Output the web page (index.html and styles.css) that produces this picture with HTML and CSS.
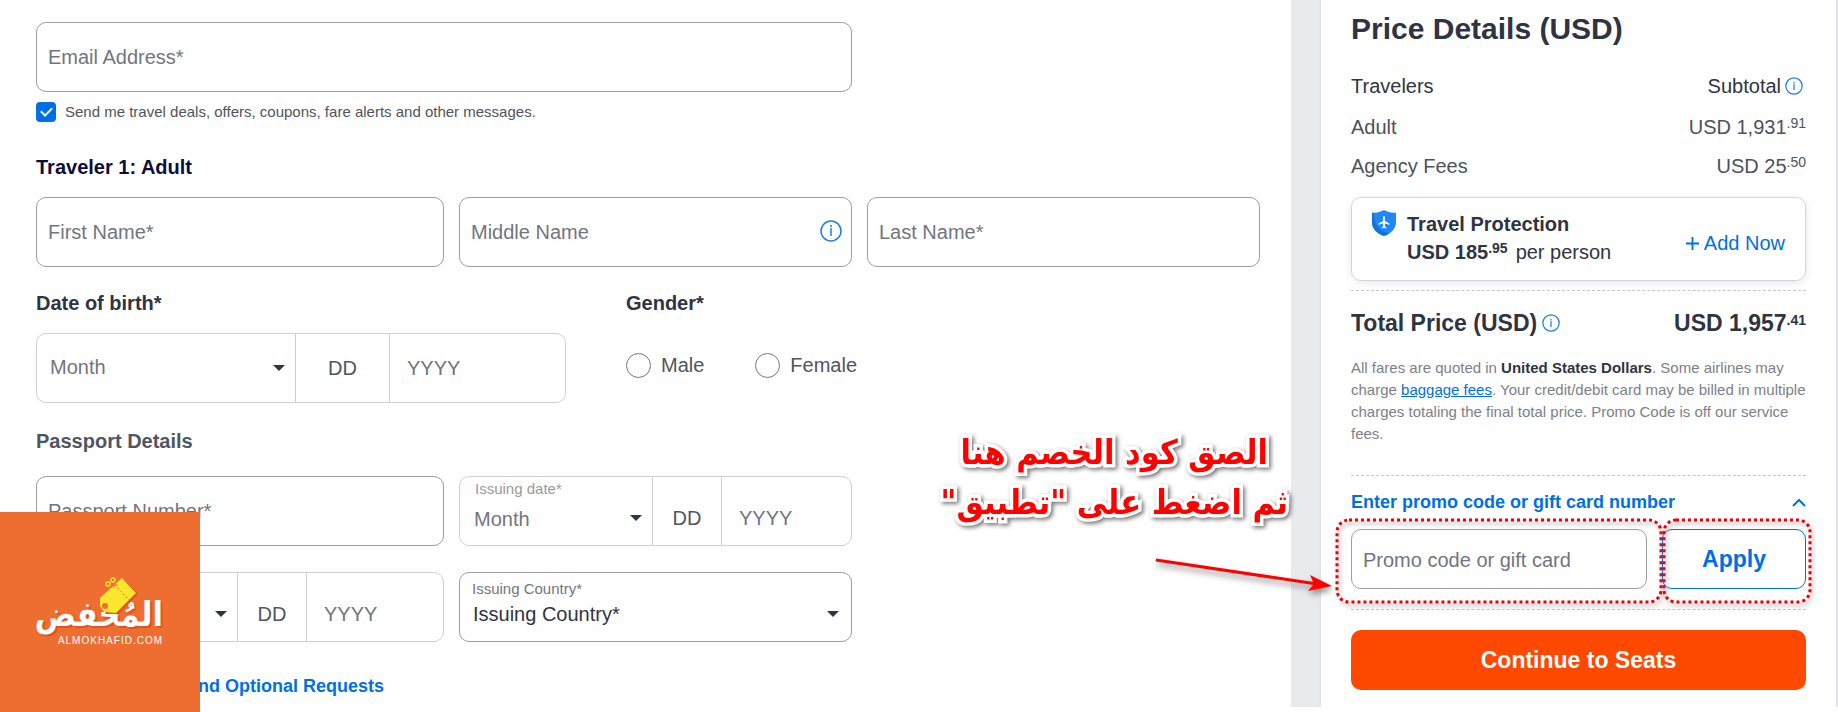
FILE: index.html
```
<!DOCTYPE html>
<html lang="en">
<head>
    <meta charset="UTF-8">
    <meta name="viewport" content="width=device-width, initial-scale=1.0">
    <title>Traveler Details</title>
    <link rel="stylesheet" href="styles.css">
</head>
<body>
    <div class="page">
        <main class="traveler-form">
            <div class="grid">
                <input class="field wide" type="email" placeholder="Email Address*" aria-label="Email Address">
            </div>
            <label class="subscribe">
                <input type="checkbox" checked>
                <span>Send me travel deals, offers, coupons, fare alerts and other messages.</span>
            </label>

            <h2 class="traveler-title">Traveler 1: Adult</h2>
            <div class="grid">
                <input class="field" type="text" placeholder="First Name*" aria-label="First Name">
                <div class="field-wrap">
                    <input class="field" type="text" placeholder="Middle Name" aria-label="Middle Name">
                    <svg class="info" viewBox="0 0 22 22"><circle cx="11" cy="11" r="10"/><path d="M11 8v8M11 5v2"/></svg>
                </div>
                <input class="field" type="text" placeholder="Last Name*" aria-label="Last Name">
            </div>

            <div class="birth-row">
                <section class="birth">
                    <h3>Date of birth*</h3>
                    <div class="date-group">
                        <select class="month" aria-label="Month of birth"><option>Month</option></select>
                        <input class="day" type="text" placeholder="DD" aria-label="Day of birth">
                        <input class="year" type="text" placeholder="YYYY" aria-label="Year of birth">
                    </div>
                </section>
                <section class="gender">
                    <h3>Gender*</h3>
                    <div class="radios">
                        <label><input type="radio" name="gender"> Male</label>
                        <label><input type="radio" name="gender"> Female</label>
                    </div>
                </section>
            </div>

            <h3 class="passport-title">Passport Details</h3>
            <div class="grid passport">
                <input class="field" type="text" placeholder="Passport Number*" aria-label="Passport Number">
                <div class="date-group small issue">
                    <div class="labelled">
                        <label for="issue-month">Issuing date*</label>
                        <select class="month" id="issue-month"><option>Month</option></select>
                    </div>
                    <input class="day" type="text" placeholder="DD" aria-label="Issuing day">
                    <input class="year" type="text" placeholder="YYYY" aria-label="Issuing year">
                </div>
                <div class="date-group small expiry">
                    <select class="month" aria-label="Expiration month"><option>Month</option></select>
                    <input class="day" type="text" placeholder="DD" aria-label="Expiration day">
                    <input class="year" type="text" placeholder="YYYY" aria-label="Expiration year">
                </div>
                <div class="country">
                    <label for="country">Issuing Country*</label>
                    <select id="country"><option>Issuing Country*</option></select>
                </div>
            </div>
            <a class="optional" href="#"><span class="plus">+</span>Frequent Flyer and Optional Requests</a>
        </main>

        <aside class="price-card">
            <h1>Price Details (USD)</h1>
            <div class="row head">
                <span>Travelers</span>
                <span class="with-icon">Subtotal <svg class="info" viewBox="0 0 22 22"><circle cx="11" cy="11" r="10"/><path d="M11 9v7M11 6v2"/></svg></span>
            </div>
            <div class="row adult"><span>Adult</span><span>USD 1,931<sup>.91</sup></span></div>
            <div class="row"><span>Agency Fees</span><span>USD 25<sup>.50</sup></span></div>

            <div class="protection">
                <svg class="shield" viewBox="0 0 24 26">
                    <path fill="#1f87f7" d="M12 0c3.500 2 7.500 2.800 12 2.800V12c0 7-5 11.500-12 14C5 23.500 0 19 0 12V2.800C4.500 2.800 8.500 2 12 0z"/>
                    <path fill="#1272dd" d="M0 12c0 7 5 11.500 12 14 2-.7 4-1.700 5.500-2.800C9 22 2.500 17 1.500 2.800H0z"/>
                    <path fill="#fff" d="M12 6c.6 0 .9.800.9 1.600v3.300l4.600 2.700v1.100l-4.600-1.200v3l1.400 1.100v.8L12 17.800l-2.300.6v-.8l1.400-1.100v-3l-4.600 1.200v-1.100l4.600-2.700V7.600C11.100 6.800 11.400 6 12 6z"/>
                </svg>
                <div class="protection-text">
                    <strong>Travel Protection</strong>
                    <div class="per-person"><strong>USD 185<sup>.95</sup></strong><span>per person</span></div>
                </div>
                <button class="add" type="button"><svg viewBox="0 0 14 14"><path d="M7 0v14M0 7h14"/></svg>Add Now</button>
            </div>

            <div class="row total">
                <span class="with-icon">Total Price (USD) <svg class="info" viewBox="0 0 22 22"><circle cx="11" cy="11" r="10"/><path d="M11 9v7M11 6v2"/></svg></span>
                <span>USD 1,957<sup>.41</sup></span>
            </div>
            <p class="fine">All fares are quoted in <strong>United States Dollars</strong>. Some airlines may charge <a href="#">baggage fees</a>. Your credit/debit card may be billed in multiple charges totaling the final total price. Promo Code is off our service fees.</p>

            <div class="promo">
                <label class="promo-title" for="promo">Enter promo code or gift card number
                    <svg viewBox="0 0 14 9"><path d="M1 8l6-6 6 6"/></svg>
                </label>
                <div class="promo-row">
                    <div class="promo-input">
                        <input id="promo" type="text" placeholder="Promo code or gift card">
                        <svg class="mark"><rect x="2" y="2" rx="12"/></svg>
                    </div>
                    <div class="promo-apply">
                        <button type="button">Apply</button>
                        <svg class="mark"><rect x="2" y="2" rx="12"/></svg>
                    </div>
                </div>
            </div>
            <button class="continue" type="button">Continue to Seats</button>
        </aside>
    </div>

    <!-- instruction pointing at the promo box -->
    <div class="note" lang="ar" dir="rtl">الصق كود الخصم هنا<br>ثم اضغط على "تطبيق"</div>
    <svg class="arrow" viewBox="0 0 190 50">
        <path d="M1 10L162 34" stroke="#fe0000" stroke-width="3"/>
        <path d="M177 36l-22-11 4 9-6 7z" fill="#fe0000"/>
    </svg>

    <!-- site logo -->
    <div class="logo">
        <svg class="tag" viewBox="0 0 42 38">
            <path fill="#e3531f" d="M25 3l13 14-19 20H6l-4-6v-9z"/>
            <path fill="#fbe62e" d="M22 1l14 15-20 20-12-1-4-6v-8z"/>
            <circle cx="5" cy="29" r="3" fill="#ee6e31"/>
            <path d="M12 5l17 18" stroke="#ee6e31" stroke-dasharray="2 2"/>
            <path d="M10 8h8M14 3v8" stroke="#ee6e31"/>
            <g fill="none" stroke="#fbe62e" stroke-width="1.500"><circle cx="13" cy="3" r="2"/><circle cx="8" cy="7" r="2"/></g>
        </svg>
        <div class="logo-name" lang="ar" dir="rtl">المُخفض</div>
        <div class="logo-url">ALMOKHAFID.COM</div>
    </div>
</body>
</html>
```
FILE: styles.css
```
* {
    box-sizing: border-box;
}
body {
    margin: 0;
    font-family: "Liberation Sans", Arial, sans-serif;
    font-size: 20px;
    color: #2f3442;
    background-color: #fff;
    overflow: hidden;
}
h1, h2, h3, p {
    margin: 0;
}
input, select, button {
    font-family: inherit;
    font-size: 20px;
    color: #2f3442;
}
.page {
    display: grid;
    grid-template-columns: minmax(0, 1fr) 515px;
    column-gap: 30px;
    padding-right: 2px;
    background-color: #e9eaee;
}

/* Traveler form */
.traveler-form {
    background-color: #fff;
    padding: 22px 31px 10px 36px;
}
.grid {
    display: grid;
    grid-template-columns: minmax(0, 408fr) minmax(0, 393fr) minmax(0, 393fr);
    column-gap: 15px;
}
.field {
    width: 100%;
    height: 70px;
    border: 1px solid #9a9cab;
    border-radius: 10px;
    padding: 0 11px;
    background-color: #fff;
}
.wide {
    grid-column: span 2;
}
::placeholder {
    color: #71757f;
    opacity: 1;
}
.field-wrap {
    position: relative;
}
.info {
    width: 18px;
    height: 18px;
    fill: none;
    stroke: #1a7de8;
    stroke-width: 1.5;
}
.field-wrap .info {
    position: absolute;
    right: 10px;
    top: 23px;
    width: 22px;
    height: 22px;
}
.subscribe {
    display: flex;
    align-items: center;
    gap: 9px;
    margin-top: 10px;
    height: 20px;
    font-size: 15px;
    color: #50545c;
}
.subscribe span {
    padding-bottom: 2px;
}
.subscribe input {
    appearance: none;
    width: 20px;
    height: 20px;
    margin: 0;
    border-radius: 4px;
    background-color: #006fe6;
    display: grid;
    place-items: center;
}
.subscribe input::before {
    content: "";
    width: 9px;
    height: 5px;
    border: solid #fff;
    border-width: 0 0 2px 2px;
    transform: rotate(-45deg);
    margin-bottom: 4px;
}
h2, h3 {
    font-size: 20px;
    line-height: 24px;
}
.traveler-title {
    margin: 33px 0 18px;
    color: #0d0d3a;
}
.birth-row {
    display: flex;
    gap: 60px;
    margin-top: 24px;
}
.birth {
    width: 530px;
}
.date-group {
    display: flex;
    height: 70px;
    margin-top: 18px;
    border: 1px solid #cdd0d7;
    border-radius: 10px;
}
.date-group input, .date-group select {
    border: 0;
    background-color: transparent;
    min-width: 0;
}
select {
    appearance: none;
    background: url("data:image/svg+xml,%3Csvg xmlns='http://www.w3.org/2000/svg' viewBox='0 0 12 6'%3E%3Cpath d='M0 0h12L6 6z' fill='%232f3442'/%3E%3C/svg%3E") no-repeat right 12px center / 12px 6px;
}
.date-group .month {
    width: 258px;
    padding: 0 0 2px 13px;
    color: #71757f;
    background-position: right 10px center;
}
.date-group .day {
    width: 95px;
    border: solid #cdd0d7;
    border-width: 0 1px;
    padding: 0;
    text-align: center;
}
.day::placeholder {
    color: #50565f;
}
.date-group .year {
    flex: 1;
    width: 0;
    padding: 0 0 0 17px;
}
.gender .radios {
    display: flex;
    gap: 51px;
    margin-top: 38px;
}
.radios label {
    display: flex;
    align-items: center;
    gap: 10px;
    color: #50545c;
}
.radios input {
    appearance: none;
    width: 25px;
    height: 25px;
    margin: 0;
    border: 1px solid #777;
    border-radius: 50%;
}
.passport-title {
    margin: 26px 0 23px;
    color: #50565f;
}
.passport {
    row-gap: 26px;
}
.passport > :nth-child(odd) {
    grid-column: 1;
}
.small {
    margin: 0;
}
.small .day {
    width: 70px;
}
.small .month {
    width: 192px;
}
.small.expiry .month {
    width: 200px;
    background-position: right 10px top 38px;
}
.small.expiry input, .small.expiry .month, .small.issue input {
    padding-top: 14px;
}
.labelled {
    display: flex;
    flex-direction: column;
    padding-top: 3px;
    font-size: 15px;
    line-height: 18px;
    color: #999;
}
.labelled label {
    padding-left: 15px;
}
.labelled .month {
    flex: 1;
    padding: 0 0 6px 14px;
    background-position: right 10px top 17px;
}
.country {
    display: flex;
    flex-direction: column;
    height: 70px;
    padding-top: 7px;
    border: 1px solid #9a9cab;
    border-radius: 10px;
    font-size: 15px;
    line-height: 18px;
    color: #71757f;
}
.country label {
    padding-left: 12px;
}
.country select {
    border: 0;
    height: 32px;
    padding: 0 0 0 13px;
}
.optional {
    display: flex;
    margin-top: 33px;
    font-size: 18px;
    line-height: 22px;
    font-weight: bold;
    color: #006fe6;
    text-decoration: none;
}
.plus {
    width: 22px;
}

/* Price details */
.price-card {
    background-color: #fff;
    box-shadow: 0 0 3px #d0d2d8;
    padding: 12px 30px 0;
}
h1 {
    font-size: 30px;
    line-height: 34px;
}
.row {
    display: flex;
    justify-content: space-between;
    line-height: 24px;
    color: #4c525e;
}
sup {
    font-size: 14px;
    line-height: 0;
    vertical-align: 6px;
}
.head {
    margin: 28px 0 17px;
    color: #2f3442;
}
.adult {
    margin-bottom: 15px;
}
.with-icon {
    display: flex;
    align-items: center;
    gap: 4px;
}
.head .info {
    margin-right: 3px;
}
.protection {
    display: flex;
    height: 84px;
    margin-top: 19px;
    padding: 12px 20px;
    border: 1px solid #d5d5d9;
    border-radius: 10px;
    box-shadow: 0 2px 10px #e9e9ec;
}
.shield {
    width: 24px;
    height: 26px;
}
.protection-text {
    flex: 1;
    margin-left: 11px;
    line-height: 28px;
}
.per-person {
    display: flex;
    gap: 8px;
}
.add {
    display: flex;
    align-items: center;
    gap: 5px;
    padding: 8px 0 0;
    border: 0;
    background: none;
    color: #006fe6;
}
.add svg {
    width: 13px;
    height: 13px;
    stroke: #006fe6;
    stroke-width: 2;
}
.total {
    margin-top: 9px;
    padding-top: 18px;
    border-top: 1px dashed #c3c5c9;
    font-size: 23px;
    line-height: 28px;
    font-weight: bold;
    color: #2f3442;
}
.total .with-icon {
    gap: 5px;
}
.fine {
    margin: 20px 0 30px;
    font-size: 15px;
    line-height: 22px;
    color: #7c7f89;
}
.fine strong {
    color: #2f3442;
}
.fine a {
    color: #006fe6;
}
.promo {
    height: 135px;
    padding-top: 15px;
    border: dashed #c3c5c9;
    border-width: 1px 0;
}
.promo-title {
    display: flex;
    justify-content: space-between;
    align-items: center;
    font-size: 18px;
    line-height: 22px;
    font-weight: bold;
    color: #006fe6;
}
.promo-title svg {
    width: 14px;
    height: 9px;
    fill: none;
    stroke: #006fe6;
    stroke-width: 2;
}
.promo-row {
    display: flex;
    gap: 15px;
    margin-top: 16px;
    height: 60px;
}
.promo-input, .promo-apply {
    position: relative;
}
.promo-input {
    flex: 1;
}
.promo-input input {
    width: 100%;
    height: 60px;
    border: 1px solid #9a9cab;
    border-radius: 10px;
    padding: 2px 11px 0;
}
.promo-apply button {
    width: 144px;
    height: 60px;
    border: 1px solid #006fe6;
    border-radius: 10px;
    background-color: #fff;
    color: #006fe6;
    font-size: 23px;
    font-weight: bold;
}
.mark {
    position: absolute;
    left: -16px;
    top: -11px;
    width: calc(100% + 32px);
    height: 86px;
    filter: drop-shadow(2px 3px 2px #999);
    pointer-events: none;
}
.mark rect {
    width: calc(100% - 4px);
    height: 82px;
    fill: none;
    stroke: #e8000a;
    stroke-width: 3;
    stroke-dasharray: 3 3;
}
.promo-apply .mark {
    left: 0;
    width: calc(100% + 6px);
}
.continue {
    width: 100%;
    height: 60px;
    margin-top: 20px;
    border: 0;
    border-radius: 10px;
    background-color: #ff4800;
    color: #fff;
    font-size: 23px;
    font-weight: bold;
}

/* Overlays */
.note {
    position: absolute;
    right: 550px;
    top: 427px;
    font-family: "DejaVu Sans Condensed", "DejaVu Sans", sans-serif;
    font-size: 34px;
    line-height: 50px;
    font-weight: bold;
    text-align: center;
    color: #fe0000;
    -webkit-text-stroke: 7px #fff;
    paint-order: stroke fill;
    filter: drop-shadow(2px 2px 2px #777);
}
.arrow {
    position: absolute;
    right: 493px;
    top: 550px;
    width: 190px;
    height: 50px;
    filter: drop-shadow(1px 4px 3px #888);
}
.logo {
    position: absolute;
    left: 0;
    top: 512px;
    width: 200px;
    height: 200px;
    padding: 80px 37px 0 35px;
    background-color: #ee6e31;
    color: #fff;
}
.tag {
    position: absolute;
    left: 100px;
    top: 65px;
    width: 42px;
    height: 38px;
}
.logo-name {
    font-family: "DejaVu Sans Condensed", "DejaVu Sans", sans-serif;
    font-size: 34px;
    line-height: 44px;
    font-weight: bold;
    text-shadow: 2px 2px 0 #e3531f;
}
.logo-url {
    font-size: 10px;
    line-height: 10px;
    letter-spacing: 1px;
    text-align: right;
}
```
